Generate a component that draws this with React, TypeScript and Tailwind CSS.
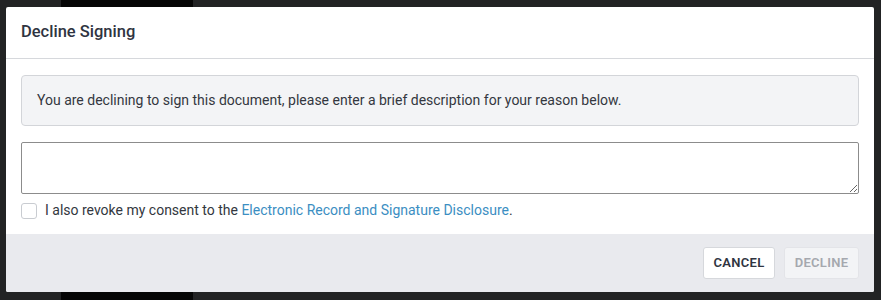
import { useState } from 'react';

/**
 * DeclineSigningModal
 * Dialog asking the signer for a reason before declining a document
 */
export default function App() {
  const [reason, setReason] = useState('');
  const [revoke, setRevoke] = useState(false);

  return (
    <div
      className="relative h-[300px] w-[881px] overflow-hidden bg-[#222324]"
      style={{ fontFamily: 'Roboto, "Liberation Sans", sans-serif' }}
    >
      {/* dark strips of the page behind the overlay */}
      <div className="absolute left-[61px] top-0 h-full w-[132px] bg-[#050505]" />

      <div className="absolute left-[6px] top-[7px] flex h-[285px] w-[868px] flex-col overflow-hidden rounded-[2px] bg-white">
        <div className="flex h-[52px] items-center border-b border-[#d6d8dc] px-[15px]">
          <h2 className="text-[16.5px] font-medium text-[#2f3441]">Decline Signing</h2>
        </div>

        <div className="flex flex-col px-[15px] pt-[16px]">
          <div className="flex h-[51px] items-center rounded-[4px] border border-[#d3d5d9] bg-[#f3f4f6] px-[15px]">
            <p className="text-[14px] text-[#333740]">
              You are declining to sign this document, please enter a brief description for your reason below.
            </p>
          </div>

          <textarea
            value={reason}
            onChange={e => setReason(e.target.value)}
            className="mt-[16px] h-[52px] w-full rounded-[2px] border border-[#8c8c8c] bg-white px-2 py-1 text-[14px] outline-none"
          />

          <label className="mt-[6px] flex items-center gap-[8px] text-[14px] text-[#333740]">
            <input
              type="checkbox"
              checked={revoke}
              onChange={e => setRevoke(e.target.checked)}
              className="h-[16px] w-[16px] appearance-none rounded-[3px] border border-[#c9ccd1] bg-white"
            />
            <span>
              I also revoke my consent to the{' '}
              <a href="#" className="text-[#3b8ec2]">Electronic Record and Signature Disclosure</a>.
            </span>
          </label>
        </div>

        <div className="mt-auto flex h-[58px] items-center justify-end gap-[9px] bg-[#e9eaee] px-[15px]">
          <button className="h-[32px] w-[72px] rounded-[3px] border border-[#d6d8dc] bg-white text-[13px] font-semibold tracking-[0.3px] text-[#2f3441]">
            CANCEL
          </button>
          <button
            disabled
            className="h-[32px] w-[75px] rounded-[3px] border border-[#e3e4e8] bg-[#f3f4f6] text-[13px] font-semibold tracking-[0.3px] text-[#a5a8ae]"
          >
            DECLINE
          </button>
        </div>
      </div>
    </div>
  );
}
